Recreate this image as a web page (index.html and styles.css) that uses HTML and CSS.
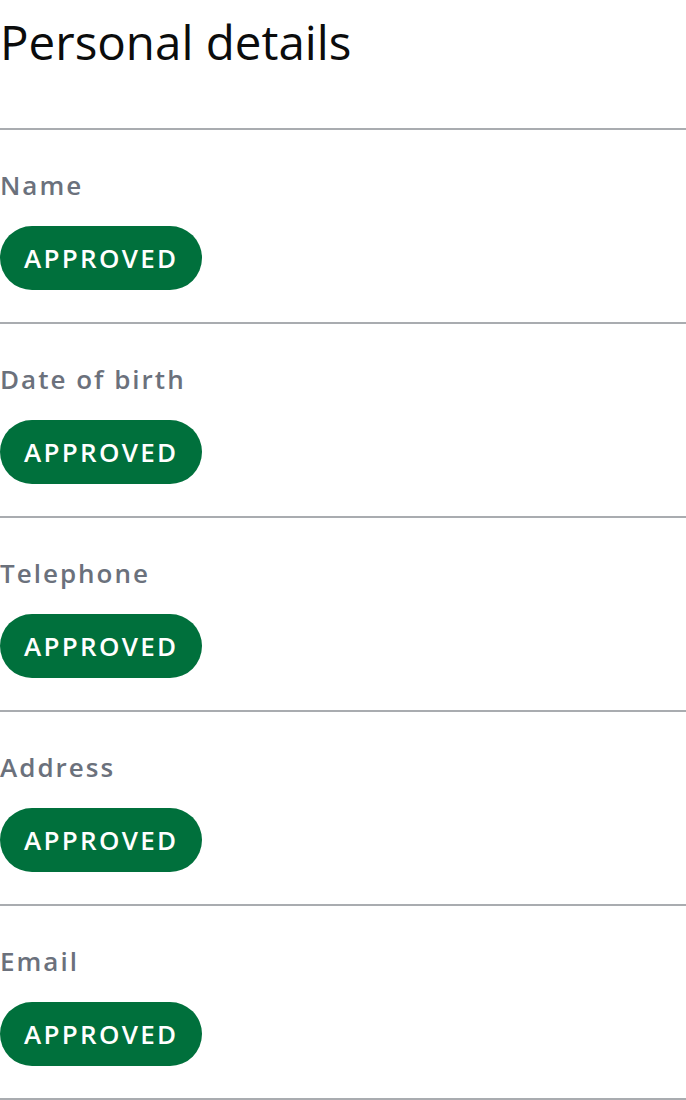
FILE: index.html
```html
<!DOCTYPE html>
<html lang="en">
<head>
<meta charset="utf-8">
<link rel="stylesheet" href="styles.css">
</head>
<body>
<main class="page">
  <h1 class="title">Personal details</h1>
  <ul class="list">
    <li class="item"><span class="label">Name</span><span class="badge">APPROVED</span></li>
    <li class="item"><span class="label">Date of birth</span><span class="badge">APPROVED</span></li>
    <li class="item"><span class="label">Telephone</span><span class="badge">APPROVED</span></li>
    <li class="item"><span class="label">Address</span><span class="badge">APPROVED</span></li>
    <li class="item"><span class="label">Email</span><span class="badge">APPROVED</span></li>
  </ul>
</main>
</body>
</html>
```
FILE: styles.css
```css
html, body {
  margin: 0;
  padding: 0;
  background: #ffffff;
}
body {
  font-family: "Open Sans", "Noto Sans", sans-serif;
  color: #0b0c0c;
}
.title {
  margin: 0;
  height: 128px;
  font-size: 47.5px;
  font-weight: 400;
  line-height: 84px;
  color: #0b0c0c;
}
.list {
  list-style: none;
  margin: 0;
  padding: 0;
  border-top: 2px solid #a9acb0;
}
.item {
  display: flex;
  flex-direction: column;
  align-items: flex-start;
  gap: 23px;
  height: 194px;
  box-sizing: border-box;
  padding-top: 37px;
  border-bottom: 2px solid #a9acb0;
}
.label {
  font-size: 26px;
  line-height: 36px;
  font-weight: 600;
  letter-spacing: 2px;
  color: #6b717c;
}
.badge {
  display: inline-flex;
  align-items: center;
  height: 64px;
  box-sizing: border-box;
  padding: 0 24px 1px;
  border-radius: 32px;
  background: #00703c;
  color: #ffffff;
  font-size: 26px;
  font-weight: 600;
  letter-spacing: 2.3px;
}
```
